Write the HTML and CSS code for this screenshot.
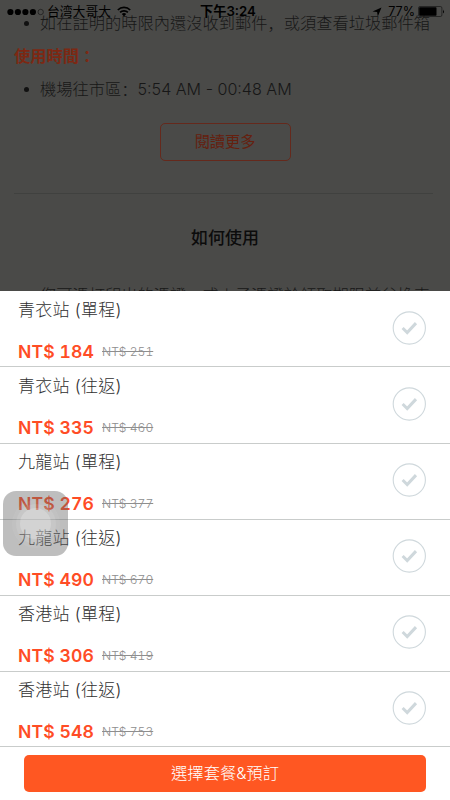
FILE: index.html
```html
<!DOCTYPE html>
<html lang="zh-Hant">
<head>
<meta charset="utf-8">
<title>選擇套餐</title>
<link rel="stylesheet" href="styles.css">
</head>
<body>
<div class="screen">
  <header class="status">
    <div class="carrier">
      <svg class="signal" width="38" height="8" viewBox="0 0 38 8"><g fill="#000"><circle cx="3.4" cy="4" r="3.1"/><circle cx="10.9" cy="4" r="3.1"/><circle cx="18.4" cy="4" r="3.1"/><circle cx="25.9" cy="4" r="3.1"/></g><circle cx="33.7" cy="4" r="2.7" fill="none" stroke="#111" stroke-width=".6"/></svg>
      <span class="operator">台湾大哥大</span>
      <svg class="wifi" width="14" height="11" viewBox="0 0 14 11"><g fill="none" stroke="#000" stroke-width="1.7"><path d="M.8 4A8.8 8.8 0 0 1 13.2 4"/><path d="M3.1 6.4a5.5 5.5 0 0 1 7.8 0"/></g><path d="M4.8 8.1a3.1 3.1 0 0 1 4.4 0L7 10.5z"/></svg>
    </div>
    <span class="clock">下午3:24</span>
    <div class="power">
      <svg class="location" width="10" height="10" viewBox="0 0 10 10"><path d="M9.5.5 5.8 9.4 5.1 5 .5 4.4z"/></svg>
      <span class="percent">77%</span>
      <svg class="battery" width="27" height="11" viewBox="0 0 27 11"><rect x=".5" y=".5" width="23.4" height="10" rx="1.5" fill="none" stroke="#171717" stroke-width=".7"/><rect x="1.2" y="1.2" width="17.3" height="8.6" rx=".7"/><path d="M25 3.5q1.8 2 0 4z"/></svg>
    </div>
  </header>

  <main class="article">
    <ul class="notes first"><li>如在註明的時限內還沒收到郵件<span class="sc">，</span>或須查看垃圾郵件箱</li></ul>
    <h2 class="times">使用時間：</h2>
    <ul class="notes hours"><li>機場往市區<span class="sc">：</span><span class="range">5:54 AM - 00:48 AM</span></li></ul>
    <div class="more">閱讀更多</div>
    <h2 class="howto">如何使用</h2>
    <ul class="notes last"><li>您可憑打印出的憑證<span class="sc">，</span>或<span class="sc">电</span>子憑證於領取期限前兌換車</li></ul>
  </main>

  <section class="sheet">
    <div class="option"><div class="info"><div class="name">青衣站 (單程)</div><div class="prices"><b>NT$ 184</b><s>NT$ 251</s></div></div><svg class="check" viewBox="0 0 34 34"><circle cx="17.3" cy="17" r="16.1"/><path d="m10.6 17 4.6 4.5 8.8-9.4"/></svg></div>
    <div class="option"><div class="info"><div class="name">青衣站 (往返)</div><div class="prices"><b>NT$ 335</b><s>NT$ 460</s></div></div><svg class="check" viewBox="0 0 34 34"><circle cx="17.3" cy="17" r="16.1"/><path d="m10.6 17 4.6 4.5 8.8-9.4"/></svg></div>
    <div class="option"><div class="info"><div class="name">九龍站 (單程)</div><div class="prices"><b>NT$ 276</b><s>NT$ 377</s></div></div><svg class="check" viewBox="0 0 34 34"><circle cx="17.3" cy="17" r="16.1"/><path d="m10.6 17 4.6 4.5 8.8-9.4"/></svg></div>
    <div class="option"><div class="info"><div class="name">九龍站 (往返)</div><div class="prices"><b>NT$ 490</b><s>NT$ 670</s></div></div><svg class="check" viewBox="0 0 34 34"><circle cx="17.3" cy="17" r="16.1"/><path d="m10.6 17 4.6 4.5 8.8-9.4"/></svg></div>
    <div class="option"><div class="info"><div class="name">香港站 (單程)</div><div class="prices"><b>NT$ 306</b><s>NT$ 419</s></div></div><svg class="check" viewBox="0 0 34 34"><circle cx="17.3" cy="17" r="16.1"/><path d="m10.6 17 4.6 4.5 8.8-9.4"/></svg></div>
    <div class="option"><div class="info"><div class="name">香港站 (往返)</div><div class="prices"><b>NT$ 548</b><s>NT$ 753</s></div></div><svg class="check" viewBox="0 0 34 34"><circle cx="17.3" cy="17" r="16.1"/><path d="m10.6 17 4.6 4.5 8.8-9.4"/></svg></div>
    <div class="submit">選擇套餐&amp;預訂</div>
  </section>

  <div class="assistive"><i class="ring"><i class="ring mid"><i class="ring core"></i></i></i></div>
</div>
</body>
</html>
```
FILE: styles.css
```css
* { box-sizing: border-box; }
body { margin: 0; }
.screen {
  position: relative;
  width: 450px;
  height: 800px;
  overflow: hidden;
  display: flex;
  flex-direction: column;
  background: #4a4a48;
  font-family: Inter, "Noto Sans CJK TC", sans-serif;
  font-weight: 300;
}
.sc { font-family: "Noto Sans CJK SC", sans-serif; }

/* Status bar floats over the scrolled article */
.status {
  position: absolute;
  inset: 0 0 auto;
  height: 23px;
  padding: 0 5px 0 7px;
  display: grid;
  grid-template-columns: 1fr auto 1fr;
  align-items: center;
  color: #000;
  font-size: 13px;
  line-height: 23px;
}
.carrier, .power { display: flex; align-items: center; }
.operator { margin-left: 2px; font-weight: 400; font-size: 12.8px; }
.wifi { margin-left: 6px; }
.clock { margin-left: 4px; font-size: 13.2px; font-weight: 600; }
.power { justify-content: flex-end; }
.percent { margin: 0 3px 0 6px; font-size: 12.6px; font-weight: 400; }

.article {
  flex: none;
  height: 291px;
  overflow: hidden;
  padding: 11px 14px 0;
  color: #171717;
}
.notes {
  margin: 0;
  padding: 0 0 0 26px;
  list-style: none;
  font-size: 16.25px;
  line-height: 24px;
  white-space: nowrap;
}
.notes li { display: flex; }
.notes li::before {
  content: "";
  flex: none;
  width: 5px;
  height: 5px;
  margin: 10px 11px 0 -16px;
  border-radius: 50%;
  background: #111;
}
.range { font-size: 16.1px; }
h2 { margin: 0; line-height: 24px; }
.times { margin-top: 9px; color: #7d2813; font-size: 16.25px; font-weight: 700; }
.hours { margin-top: 9px; }
.more {
  width: 131px;
  height: 38px;
  margin: 22px auto 0;
  border: 1px solid #65291c;
  border-radius: 5px;
  color: #65200f;
  font-size: 15.2px;
  font-weight: 400;
  line-height: 36px;
  text-align: center;
}
.howto {
  margin: 32px 3px 0 0;
  padding: 32px 0 0 3px;
  border-top: 1px solid #40413f;
  color: #0c0c0c;
  font-size: 17px;
  font-weight: 500;
  text-align: center;
}
.last { margin-top: 33px; }

.sheet { flex: 1; background: #fff; display: flex; flex-direction: column; }
.option {
  flex: none;
  height: 76px;
  padding: 0 24px 0 18px;
  border-bottom: 1px solid #c9cccb;
  display: flex;
  justify-content: space-between;
}
/* The second divider sits a pixel lower, the last row takes it back */
.option:nth-child(2) { height: 77px; }
.option:nth-child(6) { height: 75px; }
.option:nth-child(n+3) .info { padding-top: 6px; }
.option:nth-child(n+3) .check { margin-top: 19px; }
.info { display: flex; flex-direction: column; gap: 18px; padding-top: 7px; }
.name { color: #303030; font-size: 17px; line-height: 24px; letter-spacing: .25px; }
.prices { display: flex; align-items: center; line-height: 24px; font-variant-numeric: tabular-nums; }
.prices b { width: 84px; color: #ff4c25; font-size: 17.6px; font-weight: 600; letter-spacing: .1px; white-space: nowrap; }
.prices s { color: #8e8e8e; font-size: 12.1px; white-space: nowrap; }
.check { width: 34px; height: 34px; margin-top: 20px; fill: none; stroke: #cfd8dc; stroke-width: 1.1; }
.check path { stroke-width: 3; }
.submit {
  height: 37px;
  margin: 8px 24px 0;
  border-radius: 5px;
  background: #ff5722;
  color: #fff;
  font-size: 16.3px;
  line-height: 37px;
  text-align: center;
}

/* Floating assistive button */
.assistive {
  position: absolute;
  left: 3px;
  top: 491px;
  width: 65px;
  height: 65px;
  border-radius: 13px;
  background: rgba(100, 100, 100, .42);
  display: flex;
  align-items: center;
  justify-content: center;
}
.ring {
  width: 48px;
  height: 48px;
  border-radius: 50%;
  background: rgba(255, 255, 255, .06);
  display: flex;
  align-items: center;
  justify-content: center;
}
.mid { width: 40px; height: 40px; background: rgba(255, 255, 255, .1); }
.core { width: 31px; height: 31px; background: rgba(255, 255, 255, .22); }
```
